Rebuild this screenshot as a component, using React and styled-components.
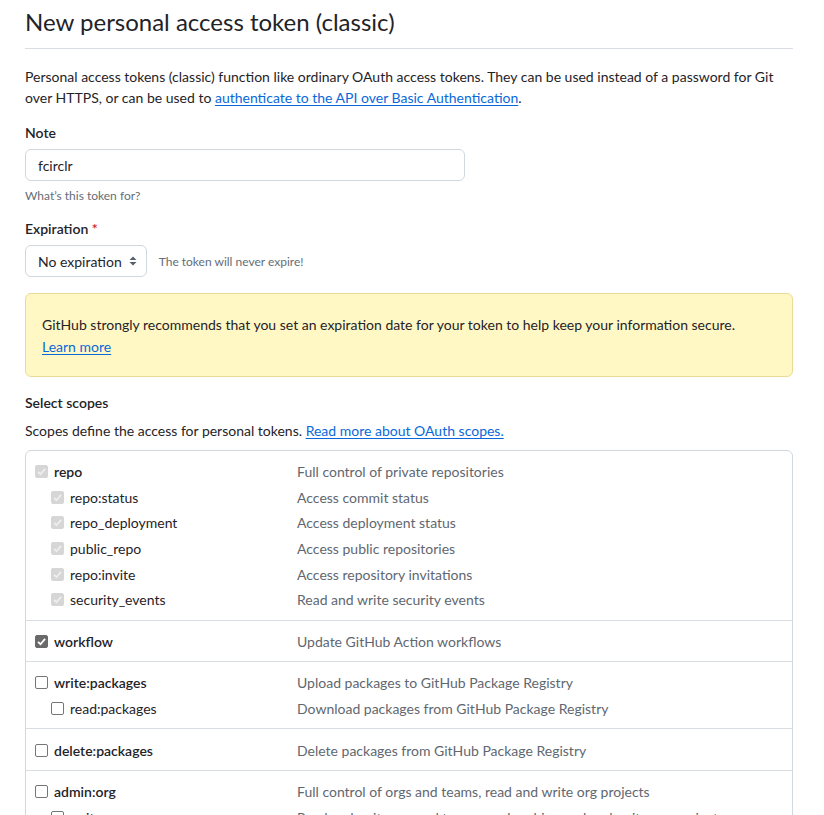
import styled, { createGlobalStyle } from "styled-components";

const GlobalStyle = createGlobalStyle`
  body {
    margin: 0;
    background: #ffffff;
    color: #1f2328;
    font-family: Lato, "Noto Sans", "Liberation Sans", sans-serif;
    font-size: 14px;
  }
`;

const scopeGroups = [
  {
    name: "repo",
    desc: "Full control of private repositories",
    state: "locked",
    children: [
      ["repo:status", "Access commit status"],
      ["repo_deployment", "Access deployment status"],
      ["public_repo", "Access public repositories"],
      ["repo:invite", "Access repository invitations"],
      ["security_events", "Read and write security events"],
    ],
  },
  { name: "workflow", desc: "Update GitHub Action workflows", state: "checked", children: [] },
  {
    name: "write:packages",
    desc: "Upload packages to GitHub Package Registry",
    children: [["read:packages", "Download packages from GitHub Package Registry"]],
  },
  { name: "delete:packages", desc: "Delete packages from GitHub Package Registry", children: [] },
  {
    name: "admin:org",
    desc: "Full control of orgs and teams, read and write org projects",
    children: [
      ["write:org", "Read and write org and team membership, read and write org projects"],
      ["read:org", "Read org and team membership, read org projects"],
    ],
  },
];

const CheckMark = ({ color }) => (
  <svg width="11" height="11" viewBox="0 0 12 12">
    <path d="M2.2 6.3 L4.9 9 L9.9 3.2" fill="none" stroke={color} strokeWidth="2" />
  </svg>
);

const Checkbox = ({ state }) => (
  <Box $state={state}>
    {state === "checked" && <CheckMark color="#ffffff" />}
    {state === "locked" && <CheckMark color="#eeeeee" />}
  </Box>
);

const ScopeRow = ({ name, desc, state, sub }) => (
  <Row>
    <LabelCell $sub={sub}>
      <Checkbox state={state} />
      <ScopeName $sub={sub}>{name}</ScopeName>
    </LabelCell>
    <Desc>{desc}</Desc>
  </Row>
);

const App = () => {
  return (
    <Page>
      <GlobalStyle />
      <Header>
        <Title>New personal access token (classic)</Title>
      </Header>
      <Intro>
        Personal access tokens (classic) function like ordinary OAuth access tokens. They can be used
        instead of a password for Git over HTTPS, or can be used to{" "}
        <Link href="#">authenticate to the API over Basic Authentication</Link>.
      </Intro>

      <Field>
        <Label>Note</Label>
        <TextInput defaultValue="fcirclr" />
        <Hint>What’s this token for?</Hint>
      </Field>

      <Field>
        <Label>
          Expiration <Required>*</Required>
        </Label>
        <SelectRow>
          <Select>
            No expiration
            <svg width="10" height="12" viewBox="0 0 10 12">
              <path d="M5 1.5 L8.5 5 H1.5 Z M5 10.5 L8.5 7 H1.5 Z" fill="#57606a" />
            </svg>
          </Select>
          <SelectNote>The token will never expire!</SelectNote>
        </SelectRow>
      </Field>

      <Flash>
        GitHub strongly recommends that you set an expiration date for your token to help keep your
        information secure.
        <br />
        <Link href="#">Learn more</Link>
      </Flash>

      <Label>Select scopes</Label>
      <ScopesNote>
        Scopes define the access for personal tokens.{" "}
        <Link href="#">Read more about OAuth scopes.</Link>
      </ScopesNote>

      <ScopeTable>
        {scopeGroups.map((g) => (
          <Group key={g.name}>
            <ScopeRow name={g.name} desc={g.desc} state={g.state} />
            {g.children.map(([n, d]) => (
              <ScopeRow key={n} name={n} desc={d} state={g.state === "locked" ? "locked" : undefined} sub />
            ))}
          </Group>
        ))}
      </ScopeTable>
    </Page>
  );
};

const Page = styled.div`
  width: 768px;
  padding: 4px 0 40px 25px;
`;

const Header = styled.div`
  padding-bottom: 8px;
  border-bottom: 1px solid #d8dee4;
`;

const Title = styled.h1`
  margin: 0;
  font-size: 24px;
  font-weight: 400;
  line-height: 36px;
`;

const Intro = styled.p`
  margin: 17px 0 14px;
  line-height: 21px;
`;

const Link = styled.a`
  color: #0969da;
  text-decoration: underline;
  text-underline-offset: 2px;
`;

const Field = styled.div`
  margin-bottom: 13px;
`;

const Label = styled.div`
  font-weight: 600;
  line-height: 21px;
`;

const Required = styled.span`
  color: #cf222e;
`;

const TextInput = styled.input`
  display: block;
  box-sizing: border-box;
  width: 440px;
  height: 32px;
  margin-top: 6px;
  padding: 0 12px;
  border: 1px solid #d0d7de;
  border-radius: 6px;
  font: inherit;
  color: #1f2328;
  outline: none;
`;

const Hint = styled.div`
  margin-top: 6px;
  font-size: 12px;
  line-height: 18px;
  color: #656d76;
`;

const SelectRow = styled.div`
  display: flex;
  align-items: center;
  gap: 12px;
  margin-top: 6px;
`;

const Select = styled.div`
  box-sizing: border-box;
  display: flex;
  align-items: center;
  gap: 6px;
  height: 32px;
  padding: 0 8px 0 12px;
  border: 1px solid #d0d7de;
  border-radius: 6px;
`;

const SelectNote = styled.span`
  font-size: 12px;
  color: #656d76;
`;

const Flash = styled.div`
  margin: 16px 0 15px;
  padding: 20px 16px 18px;
  background: #fff8c5;
  border: 1px solid #eadb94;
  border-radius: 6px;
  line-height: 22px;
`;

const ScopesNote = styled.p`
  margin: 7px 0 9px;
  line-height: 21px;
`;

const ScopeTable = styled.div`
  border: 1px solid #d0d7de;
  border-radius: 6px;
`;

const Group = styled.div`
  padding: 8px 0 7px;
  & + & {
    border-top: 1px solid #d8dee4;
  }
`;

const Row = styled.div`
  display: grid;
  grid-template-columns: 271px 1fr;
  align-items: center;
  height: 25.6px;
`;

const LabelCell = styled.div`
  display: flex;
  align-items: center;
  gap: 6px;
  padding-left: ${(p) => (p.$sub ? "25px" : "9px")};
`;

const ScopeName = styled.span`
  font-weight: ${(p) => (p.$sub ? 400 : 600)};
`;

const Desc = styled.span`
  color: #5f6770;
`;

const Box = styled.span`
  box-sizing: border-box;
  display: inline-flex;
  align-items: center;
  justify-content: center;
  width: 13px;
  height: 13px;
  border-radius: 2px;
  border: 1px solid
    ${(p) => (p.$state === "checked" ? "#6a6a6a" : p.$state === "locked" ? "#d6d6d6" : "#767676")};
  background: ${(p) =>
    p.$state === "checked" ? "#6a6a6a" : p.$state === "locked" ? "#d6d6d6" : "#ffffff"};
`;

export default App;
